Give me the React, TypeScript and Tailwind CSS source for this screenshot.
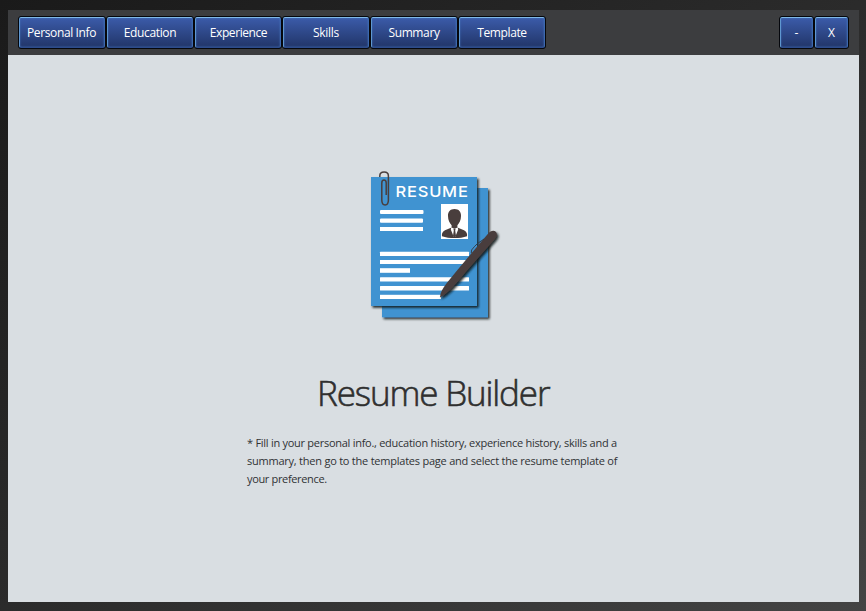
const uiFont = "font-['Open_Sans','Noto_Sans',sans-serif]";

const tabs = [
  { label: 'Personal Info', tracking: 'tracking-[-0.38px] pr-px' },
  { label: 'Education', tracking: 'tracking-[-0.36px]' },
  { label: 'Experience', tracking: 'tracking-[-0.42px] pl-px' },
  { label: 'Skills', tracking: 'tracking-[-0.3px]' },
  { label: 'Summary', tracking: 'tracking-[-0.38px]' },
  { label: 'Template', tracking: 'tracking-[-0.38px]' },
];

function GlossyButton({ label, width, tracking = '' }: { label: string; width: string; tracking?: string }) {
  return (
    <button className={`${width} h-[33px] shrink-0 rounded-[3px] border border-[#05070c] bg-[#05070c]`}>
      <span className="flex h-[31px] items-center justify-center rounded-[2px] border border-t-[#7fb9e8] border-r-[#3c68ae] border-b-[#2c4b8c] border-l-[#5f97d0] bg-linear-to-b from-[#3b5ba9] to-[#22366a] text-[12px] leading-none text-white shadow-[inset_0_0_2px_#4476be]">
        <span className={`${tracking} whitespace-nowrap`}>{label}</span>
      </span>
    </button>
  );
}

function ResumeLogo() {
  return (
    <svg width="140" height="160" viewBox="365 165 140 160" className="block">
      <defs>
        <filter id="shadow" x="-20%" y="-20%" width="150%" height="150%">
          <feDropShadow dx="1.6" dy="1.8" stdDeviation="1.1" floodColor="#101418" floodOpacity="0.9" />
        </filter>
        <clipPath id="photo">
          <rect x="441" y="204" width="27" height="35" />
        </clipPath>
      </defs>
      <rect x="382" y="188" width="106" height="129.3" fill="#4193d1" filter="url(#shadow)" />
      <rect x="371" y="177" width="106" height="129" fill="#4193d1" filter="url(#shadow)" />
      <text x="395.6" y="196.8" textLength="73" lengthAdjust="spacingAndGlyphs" fontSize="14.8" fontWeight="450" fill="#fff" fontFamily="Inter, sans-serif" letterSpacing="0.7">RESUME</text>
      <g fill="#fff">
        <rect x="380" y="210" width="43.5" height="4" rx="1" />
        <rect x="380" y="218.5" width="43" height="4.3" rx="1" />
        <rect x="380" y="227" width="43" height="4" />
        <rect x="380" y="251.7" width="89" height="4.3" rx="0.5" />
        <rect x="380" y="260" width="89" height="4" />
        <rect x="380" y="268.2" width="30" height="4.6" />
        <rect x="380" y="277.2" width="89" height="4.4" rx="0.5" />
        <rect x="380" y="286" width="89" height="4.4" rx="0.5" />
        <rect x="380" y="294.8" width="61" height="4.2" />
        <rect x="441" y="204" width="27" height="35" />
      </g>
      <g clipPath="url(#photo)">
        <path d="M454.5 209 C458.8 209 461.2 211.8 461 216 C461 220.2 459.2 223.3 457.4 225.2 L457.4 227.5 L464 230.2 C466.8 231.4 467.4 234 467 236.2 C460 238.7 449 238.7 442 236.2 C441.6 234 442.2 231.4 445 230.2 L451.6 227.5 L451.6 225.2 C449.8 223.3 448 220.2 448 216 C447.8 211.8 450.2 209 454.5 209Z" fill="#493e3d" />
        <path d="M451.3 227.5 L454.5 228.6 L457.7 227.5 L458.2 229.5 L455.2 237 H453.8 L450.8 229.5Z" fill="#fff" />
        <path d="M453.4 228.5 H455.6 L455.2 230.5 L456 236 L454.5 238 L453 236 L453.8 230.5Z" fill="#493e3d" />
      </g>
      <path d="M379.8 177 V176 C379.8 170.8 388.4 170.8 388.4 176 V200 C388.4 206.6 381.8 206.6 381.8 200 V183 C381.8 179 386.2 179 386.2 183 V195" fill="none" stroke="#493e3d" strokeWidth="1.5" />
      <g filter="url(#shadow)">
        <path d="M440 297.4 C440 293.4 442.6 288.8 446.4 283.6 C454 274.2 462 264.5 470 255 L488 233.8 C490.6 230.5 493.8 230 495.8 231.8 C497.6 233.6 497 236.6 494.8 239.2 L468.5 269 C460.5 278.2 451.5 290.4 443.4 295.4Z" fill="#493e3d" />
      </g>
      <path d="M471.3 253 L471.6 250 L474.2 246.8 L477.5 243.5 L484 239" fill="none" stroke="#35373e" strokeWidth="0.9" />
    </svg>
  );
}

export default function App() {
  return (
    <div className={`h-[611px] w-[866px] bg-linear-to-br from-[#1a1a1a] via-[#2b2b2b] to-[#444444] pt-[10px] pl-[8px] ${uiFont}`}>
      <div className="flex h-[592px] w-[851px] flex-col bg-[#d9dee2]">
        <header className="flex h-[45px] shrink-0 items-start justify-between bg-[#3c3d3f] pt-[6px] pr-[10px] pl-[10px]">
          <nav className="flex">
            {tabs.map((tab) => (
              <GlossyButton key={tab.label} label={tab.label} width="w-[88px]" tracking={tab.tracking} />
            ))}
          </nav>
          <div className="flex">
            <GlossyButton label="-" width="w-[35px]" />
            <GlossyButton label="X" width="w-[35px]" />
          </div>
        </header>
        <main className="flex flex-col pt-[110px]">
          <div className="pl-[357px]">
            <ResumeLogo />
          </div>
          <h1 className="mt-[44px] pl-[309px] text-[35px] leading-[48px] font-light tracking-[-1.14px] whitespace-nowrap text-[#2f2f2f] [-webkit-text-stroke:0.6px_#2f2f2f]">Resume Builder</h1>
          <p className="mt-[17px] pl-[239px] text-[11px] leading-[18px] whitespace-nowrap text-[#303234]">
            <span className="tracking-[-0.27px]">* Fill in your personal info., education history, experience history, skills and a</span>
            <br />
            <span className="tracking-[-0.23px]">summary, then go to the templates page and select the resume template of</span>
            <br />
            <span className="tracking-[-0.34px]">your preference.</span>
          </p>
        </main>
      </div>
    </div>
  );
}
